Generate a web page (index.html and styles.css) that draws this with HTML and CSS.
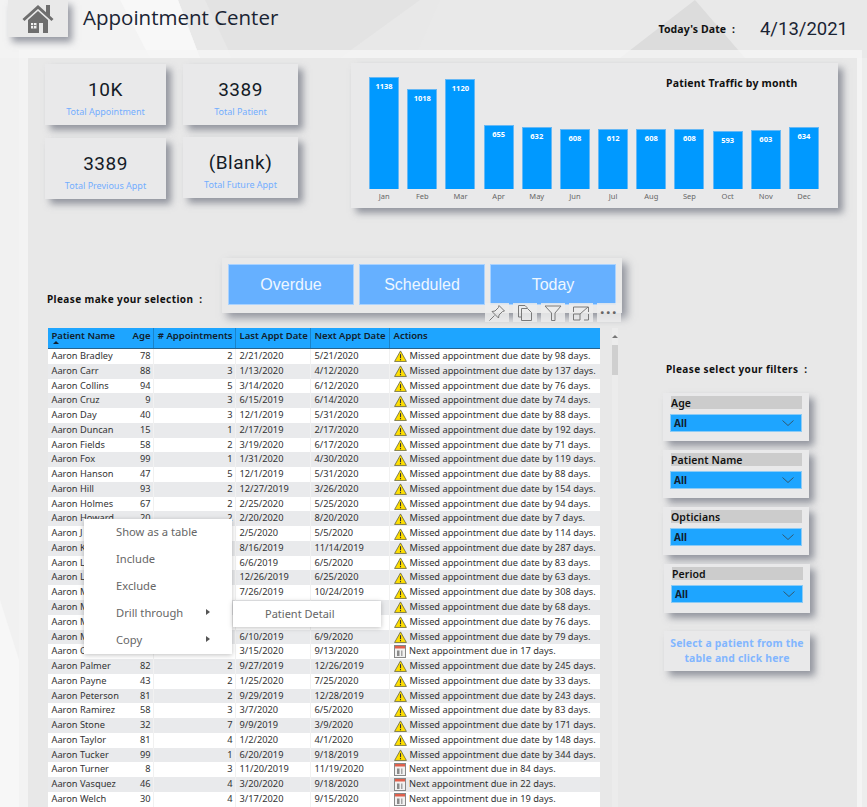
FILE: index.html
```html
<!DOCTYPE html>
<html><head><title>Appointment Center</title><meta charset="utf-8">
<link rel="stylesheet" href="styles.css">
</head>
<body>
<svg class="hidden" width="0" height="0">
    <symbol id="warn" viewBox="0 0 14 13">
        <path d="M7 1 L13.4 12.4 H.6 Z" fill="#ffdf00" stroke="#5a5a3a" stroke-width=".8" stroke-linejoin="round"/>
        <rect x="6.4" y="4.5" width="1.2" height="4.4" fill="#333"/><rect x="6.4" y="9.8" width="1.2" height="1.3" fill="#333"/>
    </symbol>
    <symbol id="cal" viewBox="0 0 12 13">
        <rect x=".5" y=".5" width="11" height="12" fill="#f1f1f1" stroke="#888"/>
        <rect x="1" y="1" width="10" height="2.500" fill="#e0604c"/>
        <rect x="3" y="5.500" width="2.500" height="5.500" fill="#8a8a8a"/><rect x="7" y="5.500" width="1.500" height="5.500" fill="#a5a5a5"/>
    </symbol>
</svg>
<div class="page">
    <svg class="fondo" width="867" height="807" viewBox="0 0 867 807">
        <polygon points="0,0 178,0 200,58 0,58" fill="#f3f3f3"/>
        <polygon points="120,0 178,0 200,58 150,58" fill="#f8f8f8"/>
        <polygon points="205,0 420,0 340,58 232,58" fill="#e3e3e3"/>
        <polygon points="440,0 867,0 867,58 415,58" fill="#e9e9e9"/>
        <polygon points="695,0 745,58 620,58" fill="#dcdcdc"/>
        <polygon points="0,58 19,58 19,807 0,807" fill="#f1f1f1"/>
        <polygon points="0,600 19,660 19,807 0,807" fill="#f7f7f7"/>
        <polygon points="857,58 867,58 867,807 857,807" fill="#ededed"/>
    </svg>

    <header class="cabecera">
        <div class="home">
            <svg width="32" height="29" viewBox="0 0 32 29">
                <rect x="24" y="1" width="4" height="11" fill="#6e6e6e"/>
                <path d="M1.5 16 L16 3 L30.5 16" fill="none" stroke="#6e6e6e" stroke-width="3"/>
                <path d="M6 16 L16 7 L26 16 V29 H21 V19 H17 V29 H6 Z" fill="#6e6e6e"/>
                <path d="M9 19 h5.500 v5.500 h-5.500 Z" fill="#f1f1f1"/><path d="M11.500 19 v5.500 M9 21.500 h5.500" stroke="#6e6e6e" stroke-width=".8"/>
            </svg>
        </div>
        <h1 class="titulo">Appointment Center</h1>
        <div class="fecha"><b>Today's Date&nbsp; :</b><span>4/13/2021</span></div>
    </header>

    <div class="panel"><div class="interior">
        <section class="arriba">
            <div class="kpis">
                <div class="kpi-col">
                    <div class="kpi"><strong>10K</strong><small>Total Appointment</small></div>
                    <div class="kpi"><strong>3389</strong><small>Total Previous Appt</small></div>
                </div>
                <div class="kpi-col estrecha">
                    <div class="kpi"><strong>3389</strong><small>Total Patient</small></div>
                    <div class="kpi"><strong>(Blank)</strong><small>Total Future Appt</small></div>
                </div>
            </div>
            <div class="grafico">
                <h4>Patient Traffic by month</h4>
                <div class="mes"><div class="barra" style="height:112px">1138</div><span>Jan</span></div>
                <div class="mes"><div class="barra" style="height:100px">1018</div><span>Feb</span></div>
                <div class="mes"><div class="barra" style="height:110px">1120</div><span>Mar</span></div>
                <div class="mes"><div class="barra" style="height:64px">655</div><span>Apr</span></div>
                <div class="mes"><div class="barra" style="height:62px">632</div><span>May</span></div>
                <div class="mes"><div class="barra" style="height:60px">608</div><span>Jun</span></div>
                <div class="mes"><div class="barra" style="height:60px">612</div><span>Jul</span></div>
                <div class="mes"><div class="barra" style="height:60px">608</div><span>Aug</span></div>
                <div class="mes"><div class="barra" style="height:60px">608</div><span>Sep</span></div>
                <div class="mes"><div class="barra" style="height:58px">593</div><span>Oct</span></div>
                <div class="mes"><div class="barra" style="height:59px">603</div><span>Nov</span></div>
                <div class="mes"><div class="barra" style="height:62px">634</div><span>Dec</span></div>
            </div>
        </section>

        <section class="medio">
            <div class="izquierda">
                <div class="seleccion">
                    <p class="etiqueta">Please make your selection&nbsp; :</p>
                    <div class="botones">
                        <button>Overdue</button><button>Scheduled</button><button>Today</button>
                    </div>
                    <div class="herramientas">
                        <span><svg width="18" height="18" viewBox="0 0 18 18"><path d="M11 1.500 L16.500 7 L14.500 7.500 L11 11 L10.500 14 L4 7.500 L7 7 L10.500 3.500 Z M6.500 11.500 L1.500 16.500" fill="none" stroke="#7a7a7a"/></svg></span>
                        <span><svg width="18" height="18" viewBox="0 0 18 18"><path d="M2.500 1.500 H9 L11 3.500 V4.500 M2.500 1.500 V13 H5.500 M5.500 4.500 H11.500 L15.500 8.500 V16.500 H5.500 Z" fill="none" stroke="#7a7a7a"/></svg></span>
                        <span><svg width="18" height="18" viewBox="0 0 18 18"><path d="M1 2 H17 L11 9 V16.500 H7.500 V9 Z" fill="none" stroke="#7a7a7a"/></svg></span>
                        <span><svg width="18" height="18" viewBox="0 0 18 18"><path d="M1.500 8 V3 H11 M1.500 10 H8 V16 H1.500 Z M8 10 L16 3 M11 3 H16.500 V8 M12 16 H16.500 V10" fill="none" stroke="#7a7a7a"/></svg></span>
                        <span class="puntos">&middot;&middot;&middot;</span>
                    </div>
                </div>

                <div class="tabla-caja">
                    <div class="tabla">
                        <div class="fila titulos">
                            <div>Patient Name<i class="orden"></i></div><div class="num">Age</div><div class="num"># Appointments</div><div>Last Appt Date</div><div>Next Appt Date</div><div>Actions</div>
                        </div>
                        <div class="fila"><div>Aaron Bradley</div><div class="num">78</div><div class="num">2</div><div>2/21/2020</div><div>5/21/2020</div><div class="acc"><svg><use href="#warn"/></svg>Missed appointment due date by 98 days.</div></div>
                        <div class="fila"><div>Aaron Carr</div><div class="num">88</div><div class="num">3</div><div>1/13/2020</div><div>4/12/2020</div><div class="acc"><svg><use href="#warn"/></svg>Missed appointment due date by 137 days.</div></div>
                        <div class="fila"><div>Aaron Collins</div><div class="num">94</div><div class="num">5</div><div>3/14/2020</div><div>6/12/2020</div><div class="acc"><svg><use href="#warn"/></svg>Missed appointment due date by 76 days.</div></div>
                        <div class="fila"><div>Aaron Cruz</div><div class="num">9</div><div class="num">3</div><div>6/15/2019</div><div>6/14/2020</div><div class="acc"><svg><use href="#warn"/></svg>Missed appointment due date by 74 days.</div></div>
                        <div class="fila"><div>Aaron Day</div><div class="num">40</div><div class="num">3</div><div>12/1/2019</div><div>5/31/2020</div><div class="acc"><svg><use href="#warn"/></svg>Missed appointment due date by 88 days.</div></div>
                        <div class="fila"><div>Aaron Duncan</div><div class="num">15</div><div class="num">1</div><div>2/17/2019</div><div>2/17/2020</div><div class="acc"><svg><use href="#warn"/></svg>Missed appointment due date by 192 days.</div></div>
                        <div class="fila"><div>Aaron Fields</div><div class="num">58</div><div class="num">2</div><div>3/19/2020</div><div>6/17/2020</div><div class="acc"><svg><use href="#warn"/></svg>Missed appointment due date by 71 days.</div></div>
                        <div class="fila"><div>Aaron Fox</div><div class="num">99</div><div class="num">1</div><div>1/31/2020</div><div>4/30/2020</div><div class="acc"><svg><use href="#warn"/></svg>Missed appointment due date by 119 days.</div></div>
                        <div class="fila"><div>Aaron Hanson</div><div class="num">47</div><div class="num">5</div><div>12/1/2019</div><div>5/31/2020</div><div class="acc"><svg><use href="#warn"/></svg>Missed appointment due date by 88 days.</div></div>
                        <div class="fila"><div>Aaron Hill</div><div class="num">93</div><div class="num">2</div><div>12/27/2019</div><div>3/26/2020</div><div class="acc"><svg><use href="#warn"/></svg>Missed appointment due date by 154 days.</div></div>
                        <div class="fila"><div>Aaron Holmes</div><div class="num">67</div><div class="num">2</div><div>2/25/2020</div><div>5/25/2020</div><div class="acc"><svg><use href="#warn"/></svg>Missed appointment due date by 94 days.</div></div>
                        <div class="fila"><div>Aaron Howard</div><div class="num">20</div><div class="num">2</div><div>2/20/2020</div><div>8/20/2020</div><div class="acc"><svg><use href="#warn"/></svg>Missed appointment due date by 7 days.</div></div>
                        <div class="fila"><div>Aaron J</div><div class="num"></div><div class="num"></div><div>2/5/2020</div><div>5/5/2020</div><div class="acc"><svg><use href="#warn"/></svg>Missed appointment due date by 114 days.</div></div>
                        <div class="fila"><div>Aaron K</div><div class="num"></div><div class="num"></div><div>8/16/2019</div><div>11/14/2019</div><div class="acc"><svg><use href="#warn"/></svg>Missed appointment due date by 287 days.</div></div>
                        <div class="fila"><div>Aaron L</div><div class="num"></div><div class="num"></div><div>6/6/2019</div><div>6/5/2020</div><div class="acc"><svg><use href="#warn"/></svg>Missed appointment due date by 83 days.</div></div>
                        <div class="fila"><div>Aaron L</div><div class="num"></div><div class="num"></div><div>12/26/2019</div><div>6/25/2020</div><div class="acc"><svg><use href="#warn"/></svg>Missed appointment due date by 63 days.</div></div>
                        <div class="fila"><div>Aaron M</div><div class="num"></div><div class="num"></div><div>7/26/2019</div><div>10/24/2019</div><div class="acc"><svg><use href="#warn"/></svg>Missed appointment due date by 308 days.</div></div>
                        <div class="fila"><div>Aaron M</div><div class="num"></div><div class="num"></div><div></div><div></div><div class="acc"><svg><use href="#warn"/></svg>Missed appointment due date by 68 days.</div></div>
                        <div class="fila"><div>Aaron M</div><div class="num"></div><div class="num"></div><div></div><div></div><div class="acc"><svg><use href="#warn"/></svg>Missed appointment due date by 76 days.</div></div>
                        <div class="fila"><div>Aaron M</div><div class="num"></div><div class="num"></div><div>6/10/2019</div><div>6/9/2020</div><div class="acc"><svg><use href="#warn"/></svg>Missed appointment due date by 79 days.</div></div>
                        <div class="fila"><div>Aaron O</div><div class="num"></div><div class="num"></div><div>3/15/2020</div><div>9/13/2020</div><div class="acc prox"><svg><use href="#cal"/></svg>Next appointment due in 17 days.</div></div>
                        <div class="fila"><div>Aaron Palmer</div><div class="num">82</div><div class="num">2</div><div>9/27/2019</div><div>12/26/2019</div><div class="acc"><svg><use href="#warn"/></svg>Missed appointment due date by 245 days.</div></div>
                        <div class="fila"><div>Aaron Payne</div><div class="num">43</div><div class="num">2</div><div>1/25/2020</div><div>7/25/2020</div><div class="acc"><svg><use href="#warn"/></svg>Missed appointment due date by 33 days.</div></div>
                        <div class="fila"><div>Aaron Peterson</div><div class="num">81</div><div class="num">2</div><div>9/29/2019</div><div>12/28/2019</div><div class="acc"><svg><use href="#warn"/></svg>Missed appointment due date by 243 days.</div></div>
                        <div class="fila"><div>Aaron Ramirez</div><div class="num">58</div><div class="num">3</div><div>3/7/2020</div><div>6/5/2020</div><div class="acc"><svg><use href="#warn"/></svg>Missed appointment due date by 83 days.</div></div>
                        <div class="fila"><div>Aaron Stone</div><div class="num">32</div><div class="num">7</div><div>9/9/2019</div><div>3/9/2020</div><div class="acc"><svg><use href="#warn"/></svg>Missed appointment due date by 171 days.</div></div>
                        <div class="fila"><div>Aaron Taylor</div><div class="num">81</div><div class="num">4</div><div>1/2/2020</div><div>4/1/2020</div><div class="acc"><svg><use href="#warn"/></svg>Missed appointment due date by 148 days.</div></div>
                        <div class="fila"><div>Aaron Tucker</div><div class="num">99</div><div class="num">1</div><div>6/20/2019</div><div>9/18/2019</div><div class="acc"><svg><use href="#warn"/></svg>Missed appointment due date by 344 days.</div></div>
                        <div class="fila"><div>Aaron Turner</div><div class="num">8</div><div class="num">3</div><div>11/20/2019</div><div>11/19/2020</div><div class="acc prox"><svg><use href="#cal"/></svg>Next appointment due in 84 days.</div></div>
                        <div class="fila"><div>Aaron Vasquez</div><div class="num">46</div><div class="num">4</div><div>3/20/2020</div><div>9/18/2020</div><div class="acc prox"><svg><use href="#cal"/></svg>Next appointment due in 22 days.</div></div>
                        <div class="fila"><div>Aaron Welch</div><div class="num">30</div><div class="num">4</div><div>3/17/2020</div><div>9/15/2020</div><div class="acc prox"><svg><use href="#cal"/></svg>Next appointment due in 19 days.</div></div>
                    </div>
                    <div class="scroll"><span class="flecha"></span><span class="pulgar"></span></div>

                    <div class="menu">
                        <div>Show as a table</div>
                        <div>Include</div>
                        <div>Exclude</div>
                        <div class="sub">Drill through</div>
                        <div class="sub">Copy</div>
                        <div class="submenu">Patient Detail</div>
                    </div>
                </div>
            </div>

            <aside class="filtros">
                <p class="etiqueta">Please select your filters&nbsp; :</p>
                <div class="slicer"><label>Age</label><div class="combo">All<svg width="12" height="6" viewBox="0 0 12 6"><path d="M.5 .5 L6 5.500 L11.500 .5" fill="none" stroke="#33586f"/></svg></div></div>
                <div class="slicer"><label>Patient Name</label><div class="combo">All<svg width="12" height="6" viewBox="0 0 12 6"><path d="M.5 .5 L6 5.500 L11.500 .5" fill="none" stroke="#33586f"/></svg></div></div>
                <div class="slicer"><label>Opticians</label><div class="combo">All<svg width="12" height="6" viewBox="0 0 12 6"><path d="M.5 .5 L6 5.500 L11.500 .5" fill="none" stroke="#33586f"/></svg></div></div>
                <div class="slicer corrida"><label>Period</label><div class="combo">All<svg width="12" height="6" viewBox="0 0 12 6"><path d="M.5 .5 L6 5.500 L11.500 .5" fill="none" stroke="#33586f"/></svg></div></div>
                <div class="aviso">Select a patient from the table and click here</div>
            </aside>
        </section>
    </div></div>
</div>
</body>
</html>
```
FILE: styles.css
```css
body {margin:0; background:#e8e8e8; font-family:"Noto Sans", sans-serif; color:#222;}
.hidden {position:absolute;}
.page {position:relative; width:867px; height:807px; overflow:hidden;}
.fondo {position:absolute; left:0; top:0;}
p, h1, h4 {margin:0;}

/* cabecera */
.cabecera {position:relative; display:flex; height:50px;}
.home {display:flex; justify-content:center; padding-top:4px; box-sizing:border-box; width:60px; height:37px; margin-left:8px; background:#e9e9e9; box-shadow:4px 5px 7px rgba(90,95,110,.6);}
.titulo {margin-left:15px; font:400 20.500px/35px "Open Sans", sans-serif; color:#1a2433;}
.fecha {display:flex; align-items:center; height:57px; margin-left:auto; padding-right:19px; gap:25px;}
.fecha b {font:700 10.500px "Noto Sans", sans-serif; letter-spacing:.1px; color:#111;}
.fecha span {font:400 18.500px Roboto, sans-serif; color:#1a2433;}

/* panel */
.panel {position:relative; margin-left:19px; width:843px; height:757px; box-sizing:border-box; padding:8px 5px 0 9px; background:rgba(245,245,245,.8);}
.interior {background:#e8e8e8; height:100%; padding:6px 0 0 17px;}
.arriba {display:flex;}
.kpis {display:flex; gap:17px;}
.kpi-col {display:flex; flex-direction:column; gap:13px; width:121px;}
.kpi-col.estrecha {width:115px; gap:12px;}
.kpi {display:flex; flex-direction:column; align-items:center; height:61px; box-sizing:border-box; padding-top:13px; background:#e9e9ea; box-shadow:5px 5px 7px rgba(90,95,110,.6);}
.kpi strong {font:400 19px/26px Roboto, sans-serif; letter-spacing:.5px; color:#141b26;}
.kpi small {margin-top:3px; font:400 9px/12px "Noto Sans", sans-serif; color:#74aeff;}

.grafico {position:relative; display:flex; align-items:flex-end; width:487px; height:145px; box-sizing:border-box; margin:-1px 0 0 53px; padding:0 15px 6px 14px; background:#e9e9ea; box-shadow:5px 5px 7px rgba(90,95,110,.6);}
.grafico h4 {position:absolute; left:315px; top:13px; font:700 10.500px "Noto Sans", sans-serif; letter-spacing:.2px; color:#111;}
.mes {flex:1; display:flex; flex-direction:column; align-items:center;}
.barra {width:30px; box-sizing:border-box; padding-top:3px; background:#0099ff; border:1px solid #66b8f5; border-bottom:0; font:700 7.500px/10px "Noto Sans", sans-serif; color:#fff; text-align:center;}
.mes span {margin-top:2px; font:400 7.500px/11px "Noto Sans", sans-serif; color:#666;}

/* medio */
.medio {display:flex;}
.izquierda {width:618px;}
.seleccion {position:relative; display:flex; height:55px; margin-top:50px;}
.etiqueta {font:700 10px/14px "Noto Sans", sans-serif; letter-spacing:.4px; color:#111;}
.seleccion .etiqueta {width:172px; padding:34px 0 0 2px;}
.botones {display:flex; gap:5px; padding:6px 6px 8px 6px; width:400px; box-sizing:border-box; margin-left:3px; background:#e9e9e9; box-shadow:5px 5px 8px rgba(90,95,110,.6);}
.botones button {flex:1; border:1px solid #a9d2ff; background:#66b0ff; color:#eef7ff; font:400 16px "Liberation Sans", sans-serif; padding:0;}
.herramientas {position:absolute; left:440px; top:45px; display:flex; gap:4px;}
.herramientas span {display:flex; align-items:center; justify-content:center; width:24px; height:19px; background:rgba(236,236,236,.85);}
.herramientas .puntos {font:700 16px/19px "Noto Sans", sans-serif; color:#666; letter-spacing:1.5px;}

.tabla-caja {position:relative; display:flex; margin:15px 0 0 3px;}
.tabla {width:552px; font:400 9.250px/14.770px "Noto Sans", sans-serif; color:#333;}
.fila {display:grid; grid-template-columns:80px 26px 82px 75px 79px 210px; height:14.770px; background:#fff;}
.fila:nth-child(odd) {background:#e9eaec;}
.fila > div {box-sizing:border-box; padding:0 2px 0 3.500px; white-space:nowrap; overflow:hidden;}
.fila > .num {text-align:right; padding:0 2.500px 0 0;}
.fila > div:nth-child(2), .fila > div:nth-child(3), .fila > div:nth-child(4), .fila > div:nth-child(5) {border-right:1px solid #f1f1f1;}
.fila.titulos {height:21px; background:#1ea5ff; border-bottom:1px solid #27628c; box-sizing:border-box; font-size:9.500px; font-weight:600; line-height:15px; color:#10202c;}
.fila.titulos > div {overflow:visible;}
.fila.titulos > div:nth-child(n+2):nth-child(-n+5) {border-right:1px solid #1b83c9;}
.orden {display:block; width:0; height:0; margin:-2px 0 0 1px; border:3px solid transparent; border-top:0; border-bottom:3px solid #123;}
.fila > .acc {display:flex; align-items:center; padding-left:3.500px; gap:3px; overflow:visible;}
.acc svg {width:13px; height:12px; flex:none;}
.acc.prox {padding-left:4px; gap:3px;}
.acc.prox svg {width:12px; height:13px;}

.scroll {position:relative; width:6px; margin-left:12px; height:480px; background:#ececec;}
.flecha {position:absolute; left:0; top:7px; border:3px solid transparent; border-top:0; border-bottom:3px solid #777;}
.pulgar {position:absolute; left:0; top:17px; width:6px; height:30px; background:#cfcfcf;}

.menu {position:absolute; left:36px; top:191px; width:148px; height:135px; background:#fff; box-shadow:0 1px 5px rgba(0,0,0,.25); font:400 11.200px/25px "Noto Sans", sans-serif; color:#666;}
.menu > div {height:27px; padding-left:32px;}
.menu .sub {position:relative;}
.menu .sub::after {content:""; position:absolute; left:122px; top:9px; border:3.500px solid transparent; border-left:4px solid #555; border-right:0;}
.menu > .submenu {position:absolute; left:149px; top:82px; width:148px; height:26px; box-sizing:border-box; background:#fff; box-shadow:0 1px 5px rgba(0,0,0,.25); font-size:11px; line-height:26px;}

/* filtros */
.filtros {padding-top:154px; width:148px;}
.filtros .etiqueta {padding:0 0 17px 3px; white-space:nowrap;}
.slicer {box-sizing:border-box; width:146px; height:48px; margin-bottom:9px; padding:3px 7px 0 7px; background:#e9e9ea; box-shadow:5px 5px 7px rgba(90,95,110,.6);}
.slicer.corrida {margin-left:1px; height:49px;}
.slicer label {display:block; margin-left:1px; height:13px; background:#cccccc; font:600 10.500px/15px "Noto Sans", sans-serif; letter-spacing:.1px; color:#111;}
.combo {display:flex; align-items:center; justify-content:space-between; height:18px; margin-top:5px; padding:0 7px 0 3px; box-sizing:border-box; width:132px; background:#1ea5ff; border:1px solid #8ccbf5; font:700 10px "Noto Sans", sans-serif; color:#102030;}
.aviso {box-sizing:border-box; width:146px; height:40px; margin:18px 0 0 1px; padding:5px 4px 0; background:#e9e9ea; box-shadow:5px 5px 7px rgba(90,95,110,.6); font:700 10.400px/15px "Noto Sans", sans-serif; letter-spacing:.2px; color:#82b6ff; text-align:center;}
```
